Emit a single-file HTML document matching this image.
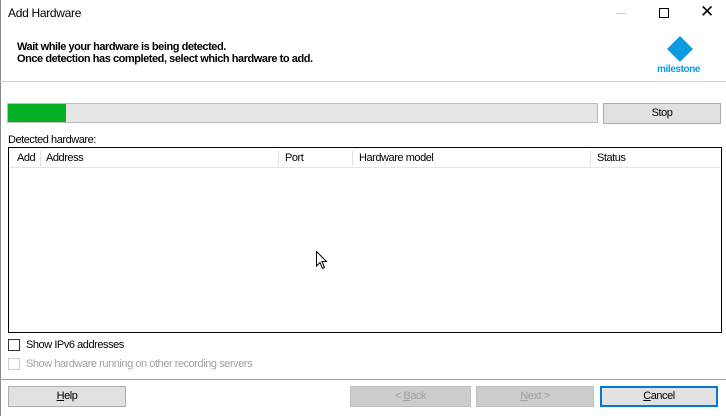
<!DOCTYPE html>
<html><head><meta charset="utf-8"><style>
*{margin:0;padding:0;box-sizing:border-box}
body{width:726px;height:416px;overflow:hidden;background:#fff;font-family:"Liberation Sans",sans-serif;font-size:11px;color:#000;position:relative;letter-spacing:-0.45px}
.a{position:absolute}
.btn{position:absolute;height:21px;border:1px solid #adadad;background:#e1e1e1;text-align:center;line-height:19px;font-size:11px}
.dis{background:#ccc;border-color:#bfbfbf;color:#a0a0a0}
.cb{position:absolute;width:12px;height:12px;border:1px solid #333;background:#fff}
.sep{position:absolute;top:151px;width:1px;height:15px;background:#e0e0e0}
</style></head><body>
<div class="a" style="left:0;top:0;width:1px;height:416px;background:#888"></div>
<div class="a" style="left:8px;top:6px;font-size:12px;letter-spacing:-0.3px">Add Hardware</div>
<div class="a" style="left:616px;top:13px;width:10px;height:1px;background:#ccc"></div>
<div class="a" style="left:659px;top:8px;width:10px;height:10px;border:1px solid #000"></div>
<div class="a" style="left:700px;top:3px;font-size:17px;line-height:17px">✕</div>
<div class="a" style="left:17px;top:41px;font-weight:bold;font-size:11px;line-height:12px;letter-spacing:-0.45px">Wait while your hardware is being detected.<br>Once detection has completed, select which hardware to add.</div>
<svg class="a" style="left:666px;top:35px" width="28" height="28"><polygon points="14,1 27,14 14,27 1,14" fill="#0a9be0"/></svg>
<div class="a" style="left:657px;top:64px;color:#0a9be0;font-weight:bold;font-size:10px;letter-spacing:-0.4px">milestone</div>
<div class="a" style="left:0;top:81px;width:726px;height:1px;background:#a8e0f0"></div>
<div class="a" style="left:7px;top:103px;width:591px;height:20px;border:1px solid #bcbcbc;background:#e6e6e6"></div>
<div class="a" style="left:8px;top:104px;width:58px;height:18px;background:#06b025"></div>
<div class="btn" style="left:603px;top:103px;width:118px">Stop</div>
<div class="a" style="left:8px;top:134px">Detected hardware:</div>
<div class="a" style="left:8px;top:147px;width:714px;height:186px;border:1px solid #000;background:#fff"></div>
<div class="a" style="left:9px;top:167px;width:712px;height:1px;background:#e5e5e5"></div>
<div class="a" style="left:17px;top:152px">Add</div>
<div class="sep" style="left:40px"></div>
<div class="a" style="left:46px;top:152px">Address</div>
<div class="sep" style="left:278px"></div>
<div class="a" style="left:285px;top:152px">Port</div>
<div class="sep" style="left:352px"></div>
<div class="a" style="left:359px;top:152px">Hardware model</div>
<div class="sep" style="left:590px"></div>
<div class="a" style="left:597px;top:152px">Status</div>
<svg class="a" style="left:316px;top:251px" width="12" height="19"><path d="M0.5,0.5 L0.5,15 L4,11.5 L6.5,17.5 L8.5,16.5 L6,10.5 L10.5,10.5 Z" fill="#fff" stroke="#000"/></svg>
<div class="cb" style="left:8px;top:339px"></div>
<div class="a" style="left:26px;top:339px">Show IPv6 addresses</div>
<div class="cb" style="left:8px;top:358px;border-color:#ccc"></div>
<div class="a" style="left:26px;top:358px;color:#a0a0a0">Show hardware running on other recording servers</div>
<div class="a" style="left:0;top:379px;width:726px;height:1px;background:#a0a0a0"></div>
<div class="btn" style="left:8px;top:386px;width:118px"><u>H</u>elp</div>
<div class="btn dis" style="left:350px;top:386px;width:121px">&lt; <u>B</u>ack</div>
<div class="btn dis" style="left:476px;top:386px;width:118px"><u>N</u>ext &gt;</div>
<div class="btn" style="left:600px;top:386px;width:118px;border:2px solid #0078d7;line-height:17px"><u>C</u>ancel</div>
</body></html>
